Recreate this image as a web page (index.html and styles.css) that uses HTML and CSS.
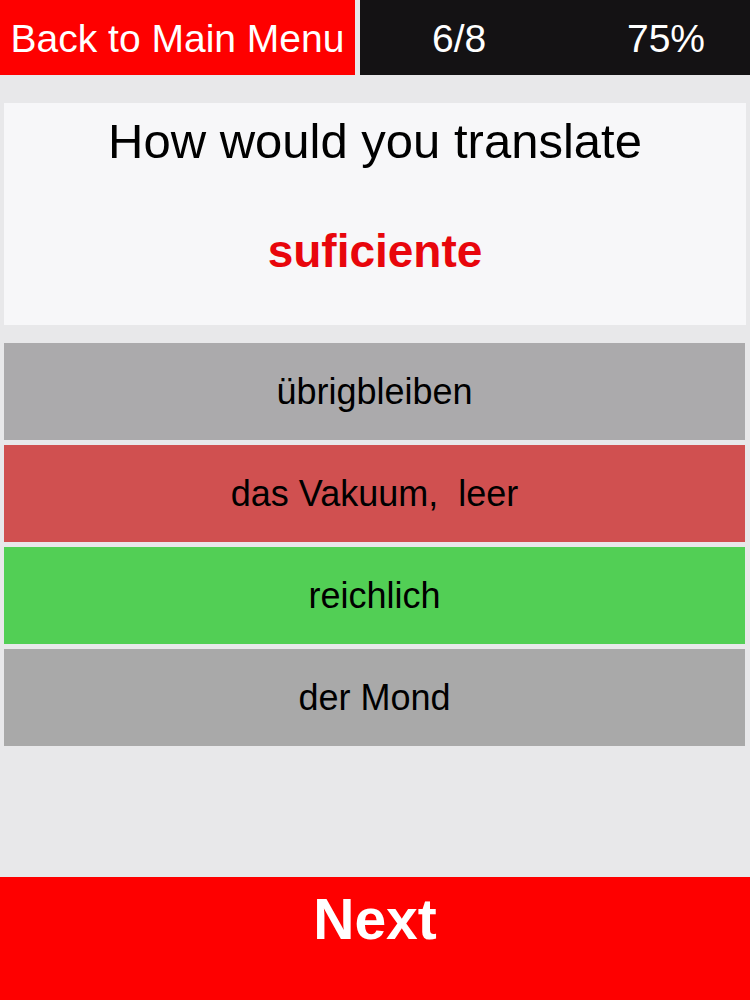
FILE: index.html
```html
<!DOCTYPE html>
<html lang="en">
<head>
<meta charset="utf-8">
<title>Quiz</title>
<link rel="stylesheet" href="styles.css">
</head>
<body>
<div class="app">
  <header class="topbar">
    <div class="back">Back to Main Menu</div>
    <div class="stats">
      <span class="stat">6/8</span>
      <span class="stat">75%</span>
    </div>
  </header>
  <section class="question">
    <div class="prompt">How would you translate</div>
    <div class="word">suficiente</div>
  </section>
  <section class="options">
    <div class="option neutral">übrigbleiben</div>
    <div class="option wrong">das Vakuum,  leer</div>
    <div class="option right">reichlich</div>
    <div class="option neutral2">der Mond</div>
  </section>
  <div class="next">Next</div>
</div>
</body>
</html>
```

FILE: styles.css
```css
html, body {
  margin: 0;
  padding: 0;
}
body {
  background: #e8e8ea;
  font-family: "Liberation Sans", Arial, Helvetica, sans-serif;
}
.app {
  height: 1000px;
  display: flex;
  flex-direction: column;
  overflow: hidden;
}
.topbar {
  display: flex;
  height: 75px;
  gap: 5px;
  color: #fff;
  font-size: 39px;
  line-height: 77px;
}
.back {
  width: 355px;
  background: #fe0000;
  text-align: center;
  white-space: nowrap;
}
.stats {
  flex: 1;
  background: #141214;
  display: flex;
  justify-content: space-between;
  padding: 0 45px 0 72px;
}
.question {
  margin: 28px 4px 0;
  height: 222px;
  box-sizing: border-box;
  background: #f7f7f9;
  text-align: center;
  padding-top: 14px;
}
.prompt {
  font-size: 49px;
  line-height: 49px;
  color: #000;
}
.word {
  margin-top: 62px;
  font-size: 46px;
  line-height: 46px;
  font-weight: bold;
  color: #e8060c;
}
.options {
  margin: 18px 5px 0 4px;
  display: flex;
  flex-direction: column;
  gap: 5px;
}
.option {
  height: 97px;
  display: flex;
  align-items: center;
  justify-content: center;
  font-size: 36px;
  color: #000;
  white-space: pre;
}
.neutral { background: #abaaac; }
.wrong { background: #d05050; }
.right { background: #52cf55; }
.neutral2 { background: #a9a9a9; }
.next {
  margin-top: auto;
  height: 123px;
  box-sizing: border-box;
  background: #fe0000;
  color: #fff;
  text-align: center;
  font-size: 57px;
  line-height: 57px;
  font-weight: bold;
  padding-top: 14px;
}
```
